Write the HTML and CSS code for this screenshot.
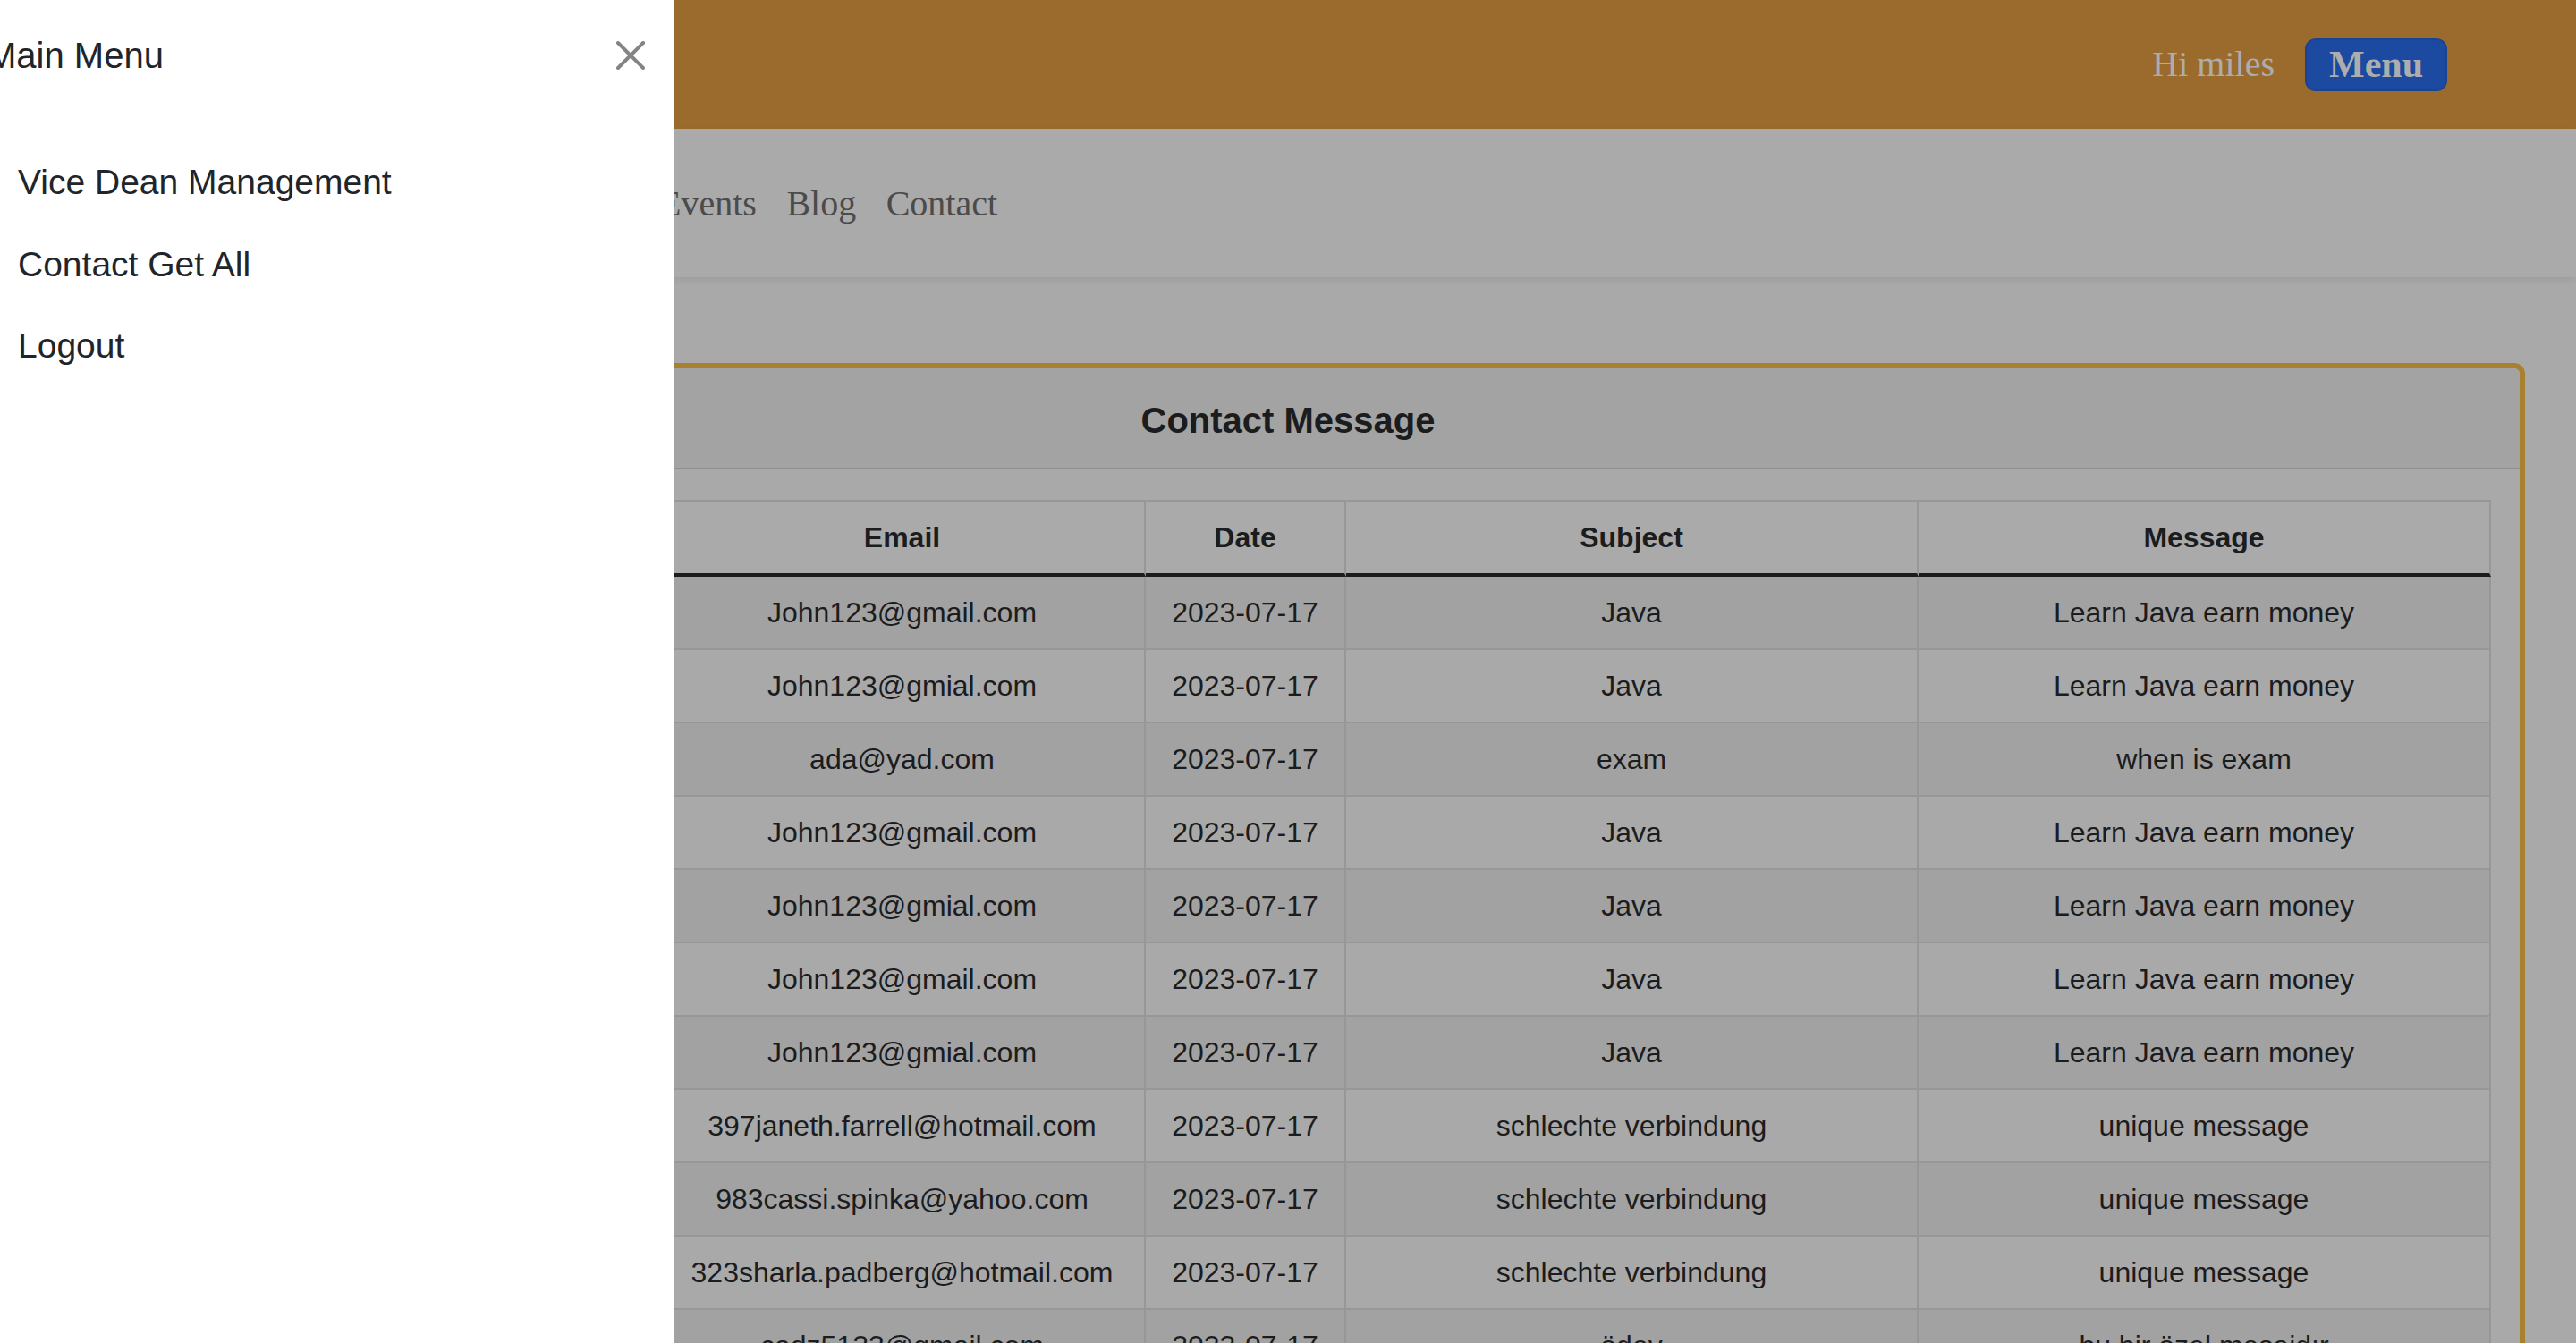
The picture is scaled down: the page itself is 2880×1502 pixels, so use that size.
FILE: index.html
```html
<!DOCTYPE html>
<html lang="en">
<head>
<meta charset="utf-8">
<title>Contact Message</title>
<link rel="stylesheet" href="styles.css">
</head>
<body>
<div class="page">
  <header class="topbar">
    <span class="greeting">Hi miles</span>
    <button class="menu-btn" type="button">Menu</button>
  </header>
  <nav class="mainnav">
    <a href="#">Events</a>
    <a href="#">Blog</a>
    <a href="#">Contact</a>
  </nav>
  <main class="content">
    <section class="card">
      <div class="card-header"><h5 class="card-title">Contact Message</h5></div>
      <div class="card-body">
        <table class="msg-table">
          <thead>
            <tr><th class="c-name"></th><th class="c-email">Email</th><th class="c-date">Date</th><th class="c-subject">Subject</th><th class="c-message">Message</th></tr>
          </thead>
          <tbody>
            <tr><td></td><td>John123@gmail.com</td><td>2023-07-17</td><td>Java</td><td>Learn Java earn money</td></tr>
            <tr><td></td><td>John123@gmial.com</td><td>2023-07-17</td><td>Java</td><td>Learn Java earn money</td></tr>
            <tr><td></td><td>ada@yad.com</td><td>2023-07-17</td><td>exam</td><td>when is exam</td></tr>
            <tr><td></td><td>John123@gmail.com</td><td>2023-07-17</td><td>Java</td><td>Learn Java earn money</td></tr>
            <tr><td></td><td>John123@gmial.com</td><td>2023-07-17</td><td>Java</td><td>Learn Java earn money</td></tr>
            <tr><td></td><td>John123@gmail.com</td><td>2023-07-17</td><td>Java</td><td>Learn Java earn money</td></tr>
            <tr><td></td><td>John123@gmial.com</td><td>2023-07-17</td><td>Java</td><td>Learn Java earn money</td></tr>
            <tr><td></td><td>397janeth.farrell@hotmail.com</td><td>2023-07-17</td><td>schlechte verbindung</td><td>unique message</td></tr>
            <tr><td></td><td>983cassi.spinka@yahoo.com</td><td>2023-07-17</td><td>schlechte verbindung</td><td>unique message</td></tr>
            <tr><td></td><td>323sharla.padberg@hotmail.com</td><td>2023-07-17</td><td>schlechte verbindung</td><td>unique message</td></tr>
            <tr><td></td><td>cadz5123@gmail.com</td><td>2023-07-17</td><td>ödev</td><td>bu bir özel mesajdır</td></tr>
          </tbody>
        </table>
      </div>
    </section>
  </main>
</div>
<aside class="offcanvas">
  <div class="oc-header">
    <h5 class="oc-title">Main Menu</h5>
    <button class="oc-close" type="button" aria-label="Close">
      <svg viewBox="0 0 16 16" aria-hidden="true"><path fill="#848484" d="M.293.293a1 1 0 0 1 1.414 0L8 6.586 14.293.293a1 1 0 1 1 1.414 1.414L9.414 8l6.293 6.293a1 1 0 0 1-1.414 1.414L8 9.414l-6.293 6.293a1 1 0 0 1-1.414-1.414L6.586 8 .293 1.707a1 1 0 0 1 0-1.414z"/></svg>
    </button>
  </div>
  <nav class="oc-body">
    <a href="#">Vice Dean Management</a>
    <a href="#">Contact Get All</a>
    <a href="#">Logout</a>
  </nav>
</aside>
</body>
</html>
```
FILE: styles.css
```css
* { box-sizing: border-box; }
html, body { margin: 0; height: 100%; }
body {
  overflow: hidden;
  background: #a9a9a9;
  font-family: "Liberation Sans", Arial, sans-serif;
  color: #1c1d1f;
}

/* top bar */
.topbar {
  height: 144px;
  background: #9a6b2d;
  display: flex;
  align-items: center;
  justify-content: flex-end;
  gap: 34px;
  padding-right: 144px;
}
.greeting {
  font-family: "Liberation Serif", "Times New Roman", serif;
  font-size: 40px;
  line-height: 48px;
  color: #adadad;
}
.menu-btn {
  font-family: "Liberation Serif", "Times New Roman", serif;
  font-weight: 700;
  font-size: 42px;
  line-height: 1;
  color: #adadad;
  background: #1c4aa0;
  border: 2px solid #1a4493;
  border-radius: 12px;
  height: 59px;
  padding: 0 25px;
  display: inline-flex;
  align-items: center;
}

/* nav row */
.mainnav {
  position: relative;
  height: 166px;
  background: #aaaaaa;
  display: flex;
  align-items: center;
  gap: 33.5px;
  padding-left: 737px;
  box-shadow: 0 3px 8px rgba(0, 0, 0, 0.07);
}
.mainnav a {
  font-family: "Liberation Serif", "Times New Roman", serif;
  font-size: 40px;
  color: #4b4b4b;
  text-decoration: none;
}

/* card */
.content { padding: 96px 57px 0; }
.card {
  border: 6px solid #a88130;
  border-radius: 12px;
  background: #a9a9a9;
}
.card-header {
  background: #a3a3a3;
  border-bottom: 2px solid #8f8f8f;
  border-radius: 6px 6px 0 0;
  padding: 34px 32px 29px;
  text-align: center;
}
.card-title {
  margin: 0;
  font-size: 40px;
  line-height: 48px;
  font-weight: 700;
  color: #1b1c1e;
}
.card-body { padding: 34px 32px 32px; }

/* table */
.msg-table {
  width: 100%;
  table-layout: fixed;
  border-collapse: separate;
  border-spacing: 0;
  border-top: 2px solid #979797;
  border-left: 2px solid #979797;
}
.msg-table th,
.msg-table td {
  padding: 16px;
  font-size: 32px;
  line-height: 48px;
  text-align: center;
  white-space: nowrap;
  color: #1b1c1e;
  border-right: 2px solid #979797;
  border-bottom: 2px solid #979797;
}
.msg-table th {
  font-weight: 700;
  background: #aaaaaa;
  border-bottom: 4px solid #1c1c1c;
}
.c-name { width: 641px; }
.c-email { width: 543px; }
.c-date { width: 224px; }
.c-subject { width: 640px; }
.msg-table tbody tr:nth-child(odd) td { background: #a2a2a2; }
.msg-table tbody tr:nth-child(even) td { background: #a9a9a9; }

/* offcanvas menu */
.offcanvas {
  position: fixed;
  top: 0;
  left: 0;
  bottom: 0;
  width: 801px;
  transform: translateX(-47px);
  background: #ffffff;
  border-right: 1px solid #8a8a8a;
  z-index: 10;
  color: #212529;
}
.oc-header {
  display: flex;
  align-items: center;
  justify-content: space-between;
  padding: 38px 32px 32px;
}
.oc-title {
  margin: 0;
  font-size: 40px;
  line-height: 48px;
  font-weight: 400;
}
.oc-close {
  width: 32px;
  height: 32px;
  padding: 0;
  border: 0;
  background: none;
  display: block;
}
.oc-close svg { display: block; width: 32px; height: 32px; }
.oc-body {
  display: flex;
  flex-direction: column;
  padding: 40px 32px;
}
.oc-body a {
  font-size: 39px;
  line-height: 59.5px;
  padding: 16px 35px;
  color: #212529;
  text-decoration: none;
}
```
